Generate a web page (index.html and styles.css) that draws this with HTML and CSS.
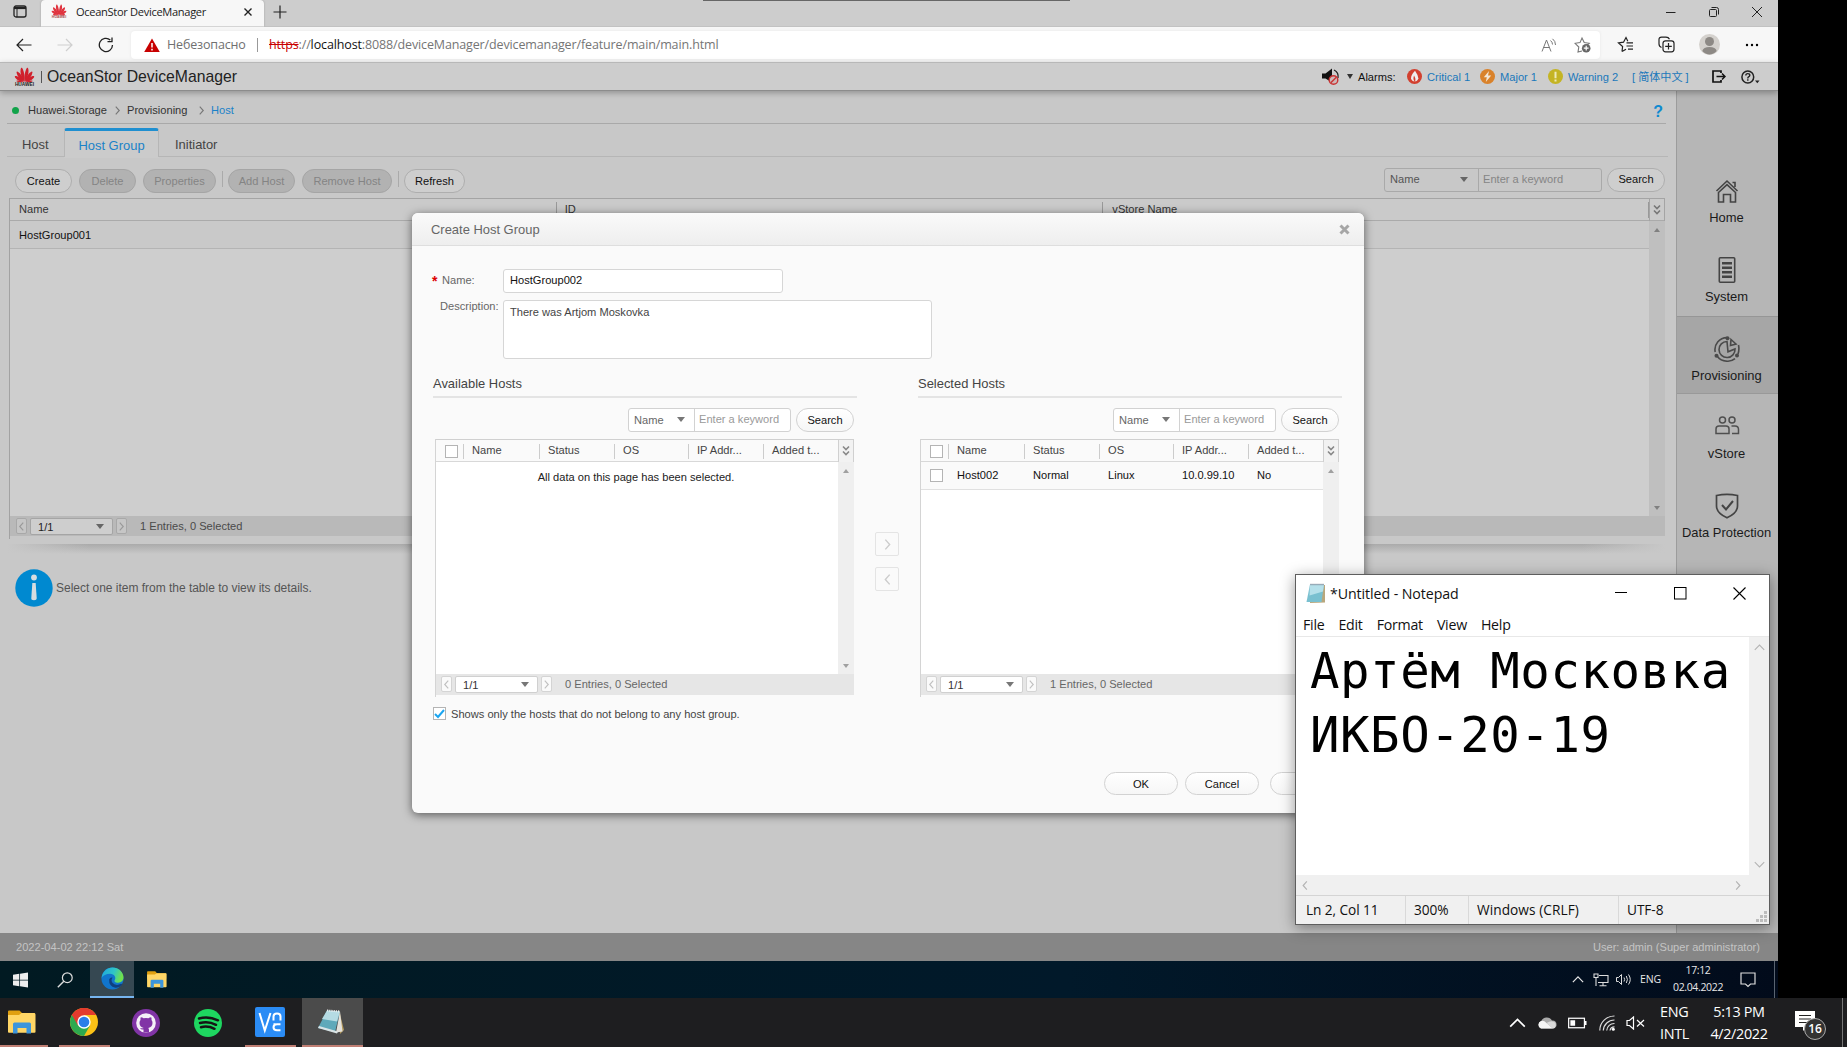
FILE: index.html
```html
<!DOCTYPE html>
<html lang="en">
<head>
<meta charset="utf-8">
<title>OceanStor DeviceManager</title>
<link rel="stylesheet" href="styles.css">
</head>
<body>
<svg class="defs" aria-hidden="true">
  <symbol id="petals" viewBox="0 0 22 16">
    <path transform="rotate(-12 11 15.500)" d="M11 15C8.800 11 8 4 10.500 .3q.5-.5 1 0C13.200 4 12.500 11 11 15z"/>
    <path transform="rotate(12 11 15.500)" d="M11 15C9.500 11 8.800 4 10.500 .3q.5-.5 1 0C14 4 13.200 11 11 15z"/>
    <path transform="rotate(-36 11 15.500)" d="M11 14.800C8.800 11 8.400 5 10.500 2q.5-.5 1 0c1.700 3 1.300 9-.5 12.800z"/>
    <path transform="rotate(36 11 15.500)" d="M11 14.800C9.200 11 8.800 5 10.500 2q.5-.5 1 0c2.100 3 1.700 9-.5 12.800z"/>
    <path transform="rotate(-59 11 15.500)" d="M11 14.600C9 11.500 8.800 6.500 10.500 4q.5-.5 1 0c1.500 2.500 1.200 7.500-.5 10.600z"/>
    <path transform="rotate(59 11 15.500)" d="M11 14.600C9.300 11.500 9 6.500 10.500 4q.5-.5 1 0c1.700 2.500 1.500 7.500-.5 10.600z"/>
    <path transform="rotate(-83 11 15.500)" d="M11 14.300q-1.300-4-.3-7 .5-.6 1 0 1 3-.7 7z"/>
    <path transform="rotate(83 11 15.500)" d="M11 14.300q-1.700-4-.7-7 .5-.6 1 0 1 3-.3 7z"/>
  </symbol>
  <symbol id="expand" viewBox="0 0 10 12"><path d="M2 1.500l3 3 3-3M2 6.500l3 3 3-3" fill="none" stroke="currentColor" stroke-width="1.600"/></symbol>
  <symbol id="left" viewBox="0 0 8 12"><path d="M6 1.500L2 6l4 4.500" fill="none" stroke="currentColor" stroke-width="1.300"/></symbol>
  <symbol id="right" viewBox="0 0 8 12"><path d="M2 1.500L6 6l-4 4.500" fill="none" stroke="currentColor" stroke-width="1.300"/></symbol>
  <symbol id="folder" viewBox="0 0 28 24">
    <path d="M0 1.500Q0 .5 1 .5h10.500L14 3H27v8H0z" fill="#e0a010"/>
    <path d="M0 5h11l2.500-2H26q1.500 0 1.500 1.500V22q0 .8-1 .8H1Q0 22.800 0 22z" fill="#ffd666"/>
    <path d="M5 23.500V14q0-1.500 1.500-1.500h15Q23 12.500 23 14v9.500h-4.500V18h-9v5.500z" fill="#3c95dc"/>
  </symbol>
  <symbol id="chevron" viewBox="0 0 14 8"><path d="M1 7l6-6 6 6" fill="none" stroke="currentColor" stroke-width="1.400"/></symbol>
</svg>

<div class="desktop">
  <div class="guest">
    <div class="tabstrip">
      <svg class="ico-panel" viewBox="0 0 14 13"><rect x="1" y="1" width="12" height="11" rx="2" fill="none" stroke="#222" stroke-width="1.300"/><path d="M1 3h12" stroke="#222" stroke-width="2.200"/><path d="M4 3v9" stroke="#222"/></svg>
      <div class="tab">
        <div class="tab-logo"><svg fill="#e0343f"><use href="#petals"/></svg><span>HUAWEI</span></div>
        <span class="tab-title">OceanStor DeviceManager</span>
        <svg class="tab-x" viewBox="0 0 10 10"><path d="M1.500 1.500l7 7M8.500 1.500l-7 7" stroke="#222" stroke-width="1.400"/></svg>
      </div>
      <svg class="plus" viewBox="0 0 14 14"><path d="M7 .5v13M.5 7h13" stroke="#222" stroke-width="1.200"/></svg>
      <div class="strip-line"></div>
      <div class="win-btns">
        <svg viewBox="0 0 12 12"><path d="M1 6.500h9.500" stroke="#222"/></svg>
        <svg viewBox="0 0 12 12"><rect x="1.500" y="3.500" width="7" height="7" rx="1" fill="none" stroke="#222"/><path d="M3.500 1.500h5q2 0 2 2v5" fill="none" stroke="#222"/></svg>
        <svg viewBox="0 0 12 12"><path d="M1 1l10 10M11 1L1 11" stroke="#222"/></svg>
      </div>
    </div>

    <div class="toolbar">
      <svg class="nav back" viewBox="0 0 16 14"><path d="M15.500 7H1M7 1L1 7l6 6" fill="none" stroke="#222" stroke-width="1.200"/></svg>
      <svg class="nav fwd" viewBox="0 0 16 14"><path d="M.5 7H15M9 1l6 6-6 6" fill="none" stroke="#cfcfcf" stroke-width="1.200"/></svg>
      <svg class="nav reload" viewBox="0 0 16 16"><path d="M14.500 8A6.600 6.600 0 1 1 12.300 3M14 .5v4.200H9.500" fill="none" stroke="#222" stroke-width="1.300"/></svg>
      <div class="address">
        <svg class="warn" viewBox="0 0 16 14"><path d="M8 .5L15.800 14H.2z" fill="#c80000"/><path d="M8 5v4.500M8 10.800v1.600" stroke="#fff" stroke-width="1.500"/></svg>
        <span class="insecure">Небезопасно</span>
        <span class="addr-sep"></span>
        <span class="url"><s>https</s>://<b>localhost</b>:8088/deviceManager/devicemanager/feature/main/main.html</span>
        <svg class="ico-read" viewBox="0 0 16 14"><path d="M1 13.500L5.500 2l4.500 11.500M2.600 9.500h5.800M9.500 2.500q2 1.500 2 4M11.500 .8q3 2.200 3 6.200" fill="none" stroke="#777"/></svg>
        <svg class="ico-fav" viewBox="0 0 17 17"><path d="M8 15l-4 1 .8-5L1 7.300l5-.7L8 2l2.200 4.600 5 .7-2 1.700" fill="none" stroke="#777" stroke-width="1.100"/><circle cx="12.200" cy="12.200" r="4.300" fill="#666"/><path d="M12.200 9.800v4.800M9.800 12.200h4.800" stroke="#fff" stroke-width="1.200"/></svg>
      </div>
      <svg class="tb favs" viewBox="0 0 17 17"><path d="M5 15.500l.6-5L1.500 7l5-.8L9 1.500l1.800 3.800M5 15.500l4-2.300" fill="none" stroke="#222" stroke-width="1.200"/><path d="M9.500 6.800H16M9.500 10H16M11 13.200h5" stroke="#222" stroke-width="1.200"/></svg>
      <svg class="tb coll" viewBox="0 0 17 17"><path d="M3.500 11.500Q1 10.500 1 8V3.500Q1 1.200 3.500 1.200H8q2.500 0 3.500 2" fill="none" stroke="#222" stroke-width="1.200"/><rect x="5" y="4.800" width="11" height="11" rx="2.500" fill="none" stroke="#222" stroke-width="1.200"/><path d="M10.500 7v6.600M7.200 10.300h6.600" stroke="#222" stroke-width="1.200"/></svg>
      <svg class="avatar" viewBox="0 0 21 21"><circle cx="10.500" cy="10.500" r="10.500" fill="#d4d1cd"/><circle cx="10.500" cy="7.500" r="4.500" fill="#8d8985"/><path d="M3.300 17q1-4 7.200-4t7.200 4q-3 3.400-7.200 3.400T3.300 17z" fill="#8d8985"/></svg>
      <svg class="dots" viewBox="0 0 14 4"><circle cx="2" cy="2" r="1.200"/><circle cx="7" cy="2" r="1.200"/><circle cx="12" cy="2" r="1.200"/></svg>
    </div>

    <header class="app-head">
      <div class="brand-logo"><svg fill="#d0202c"><use href="#petals"/></svg><span>HUAWEI</span></div>
      <span class="brand-bar"></span>
      <span class="brand">OceanStor DeviceManager</span>
      <svg class="sound" viewBox="0 0 18 17"><path d="M0 5.500h3.500L10 .5v14L3.500 10.500H0z" fill="#111"/><path d="M12 2q5 2.500 4 8" fill="none" stroke="#222" stroke-width="1.300"/><circle cx="11.500" cy="12" r="4.300" fill="#cdb9b9" stroke="#c93333" stroke-width="1.400"/><path d="M8.800 14.800l5.500-5.500" stroke="#c93333" stroke-width="1.400"/></svg>
      <span class="tiny-caret"></span>
      <span class="alarms">Alarms:</span>
      <svg class="al" viewBox="0 0 15 15"><circle cx="7.500" cy="7.500" r="7.500" fill="#d2402f"/><path d="M8 1.800Q4 6 4 9.200a3.700 3.700 0 0 0 7.300 0Q11 6 8 1.800z" fill="#eee"/><path d="M7 6.500q-1.500 4 .8 6Q9.500 10.500 7 6.500z" fill="#d2402f"/></svg>
      <a class="w53">Critical 1</a>
      <svg class="al" viewBox="0 0 15 15"><circle cx="7.500" cy="7.500" r="7.500" fill="#d9822b"/><path d="M9 2L3.800 8.300h3L5.800 13l5.400-6.400H8z" fill="#f2e6d6"/></svg>
      <a class="w48">Major 1</a>
      <svg class="al" viewBox="0 0 15 15"><circle cx="7.500" cy="7.500" r="7.500" fill="#c4b424"/><path d="M7.500 2.800v6.400M7.500 10.600v2" stroke="#eee9b8" stroke-width="2"/></svg>
      <a class="w64">Warning 2</a>
      <a class="lang">[ 简体中文 ]</a>
      <svg class="logout" viewBox="0 0 14 13"><path d="M9 3V1H1v11h8v-2" fill="none" stroke="#111" stroke-width="1.700"/><path d="M4.500 6.500H12M10 3.500l3 3-3 3" fill="none" stroke="#111" stroke-width="1.500"/></svg>
      <svg class="help" viewBox="0 0 19 14"><circle cx="6.800" cy="7" r="5.900" fill="none" stroke="#222" stroke-width="1.500"/><path d="M4.800 5.500q0-1.900 2-1.900t2 1.700q0 1-1.200 1.600-.8.400-.8 1.500M6.800 9.300v1.500" fill="none" stroke="#222" stroke-width="1.400"/><path d="M14 10.500h4.500l-2.200 2.800z" fill="#222"/></svg>
    </header>

    <div class="app-body">
      <main class="main">
        <nav class="crumbs">
          <i class="dot"></i><span class="c1">Huawei.Storage</span><svg class="cr"><use href="#right"/></svg>
          <span class="c2">Provisioning</span><svg class="cr"><use href="#right"/></svg><span class="c3">Host</span>
          <span class="q">?</span>
        </nav>
        <div class="tabs"><span class="t t-host">Host</span><span class="t active">Host Group</span><span class="t t-init">Initiator</span></div>
        <div class="actions">
          <span class="btn w57">Create</span><span class="btn off w57">Delete</span><span class="btn off w73">Properties</span><i class="bar"></i>
          <span class="btn off w67">Add Host</span><span class="btn off w90">Remove Host</span><i class="bar"></i><span class="btn w61">Refresh</span>
          <div class="filter"><span class="sel">Name<i class="caret"></i></span><span class="kw">Enter a keyword</span></div>
          <span class="btn w58">Search</span>
        </div>
        <div class="grid">
          <div class="ghead"><span class="g1">Name</span><span class="g2">ID</span><span class="g3">vStore Name</span><span class="gx"><svg><use href="#expand"/></svg></span></div>
          <div class="gbody"><div class="grows"><div class="grow">HostGroup001</div></div><div class="scroll"><i class="up"></i><i class="down"></i></div></div>
          <div class="pager"><span class="pg"><svg><use href="#left"/></svg></span><span class="pgsel">1/1<i class="caret"></i></span><span class="pg"><svg><use href="#right"/></svg></span><span class="count">1 Entries, 0 Selected</span></div>
        </div>
        <div class="grid-shadow"></div>
        <div class="hint">
          <svg viewBox="0 0 38 38"><circle cx="19" cy="19" r="18.700" fill="#0089d0"/><circle cx="19" cy="8.500" r="2.900" fill="#d6dde0"/><path d="M17.300 14h3.400l1 15.500q.1 1.700-2.700 1.700t-2.700-1.700z" fill="#d6dde0"/></svg>
          <span>Select one item from the table to view its details.</span>
        </div>
      </main>
      <aside class="side">
        <div class="item"><svg viewBox="0 0 26 26"><path d="M2.500 13L13 3l10.500 10M18.500 4.500h2.500v4.500" fill="none" stroke="#444" stroke-width="1.600"/><path d="M4.500 14.500L13 6.600l8.500 7.900v9.500h-5v-7.500h-7V24h-5z" fill="none" stroke="#444" stroke-width="1.600"/></svg><span>Home</span></div>
        <div class="item"><svg viewBox="0 0 26 26"><rect x="5.300" y=".8" width="15.400" height="24.400" rx="1" fill="none" stroke="#444" stroke-width="1.600"/><path d="M8 6.300h10M8 10.800h10M8 15.300h10M8 19.800h10" stroke="#444" stroke-width="2.600"/></svg><span>System</span></div>
        <div class="item on"><svg viewBox="0 0 26 26"><g fill="none" stroke="#4a4a4a" stroke-width="1.600"><path d="M13 5.500a8 8 0 1 0 8 7.500L14 15.800z"/><path d="M17 3.500L22 8l-5.500 1.500z"/><path d="M1.200 16A12 12 0 0 1 13 1.600M24.500 9q1 5-.5 9M3 20q4 5.500 11 5.200 4 0 7-2.500"/></g><circle cx="13.500" cy="2.200" r="2" fill="#4a4a4a"/><circle cx="2.500" cy="19.800" r="2" fill="#4a4a4a"/><circle cx="23" cy="19.500" r="2" fill="#4a4a4a"/></svg><span>Provisioning</span></div>
        <div class="item"><svg viewBox="0 0 26 26"><g fill="none" stroke="#4f4f4f" stroke-width="1.500"><circle cx="8.500" cy="6" r="3"/><circle cx="18" cy="6" r="3"/><path d="M2 19.500v-4.500q0-3 3-3h7q3 0 3 3v4.500zM17.500 12H21q3.500 0 3.500 3.500v4h-6.500"/></g></svg><span>vStore</span></div>
        <div class="item"><svg viewBox="0 0 26 26"><path d="M2.500 2.500Q13 .3 23.500 2.500V13q0 7-10.500 11.800Q2.500 20 2.500 13z" fill="none" stroke="#444" stroke-width="1.700"/><path d="M8 12l4 4.500L19 8" fill="none" stroke="#444" stroke-width="2"/></svg><span>Data Protection</span></div>
      </aside>
    </div>

    <footer class="app-foot"><span class="f-l">2022-04-02 22:12 Sat</span><span class="f-r">User: admin (Super administrator)</span></footer>

    <div class="gtask">
      <svg class="gt-win" viewBox="0 0 16 16"><path d="M0 2.300l6.700-.9v6.200H0zM7.500 1.300L16 0v7.600H7.500zM0 8.400h6.700v6.200L0 13.700zM7.500 8.400H16V16l-8.500-1.300z" fill="#eee"/></svg>
      <svg class="gt-search" viewBox="0 0 16 16"><circle cx="10.300" cy="5.700" r="4.900" fill="none" stroke="#ddd" stroke-width="1.200"/><path d="M6.800 9.200L.8 15.200" stroke="#ddd" stroke-width="1.400"/></svg>
      <div class="gt-edge"><svg viewBox="0 0 24 24">
        <defs><linearGradient id="e1" x1="0" y1="0" x2="1" y2=".3"><stop offset="0" stop-color="#1fa4e0"/><stop offset=".6" stop-color="#2fc5c6"/><stop offset="1" stop-color="#6fe04d"/></linearGradient></defs>
        <circle cx="12" cy="12" r="11.500" fill="#1175cc"/>
        <path d="M.6 11.500C1.500 4.500 6.500 .5 12 .5c6.500 0 11.500 5 11.500 10.300 0 3.500-2.500 5.600-5.600 5.600-3.500 0-4.400-1.600-3.500-2.900 1.600-2.500-.4-6.500-5-6.500-4 0-7.500 1.700-8.800 4.500z" fill="url(#e1)"/>
        <path d="M8.500 13q-.5 7 6.500 8.700 4 .5 7.300-3.500l-1.300-.6q-6 2.800-9.500-1.600-1.300-2.500.5-5-2.500-.5-3.500 2z" fill="#0f3f7f"/><path d="M23.500 16.500q-1.500 4-4 5.500l5 2z" fill="#364852"/></svg></div>
      <svg class="gt-folder"><use href="#folder"/></svg>
      <svg class="gt-chev"><use href="#chevron"/></svg>
      <svg class="gt-net" viewBox="0 0 16 14"><path d="M6 2.500h9v7H5M10 9.500v3M6.500 12.700h7M1 1h4v3.500H1zM3 4.500V13" fill="none" stroke="#ddd" stroke-width="1.100"/></svg>
      <svg class="gt-vol" viewBox="0 0 16 13"><path d="M1 4.500h2L6 1.500v10L3 8.500H1z" fill="none" stroke="#ddd"/><path d="M8.500 4.500q1.300 2 0 4M10.800 3q2.200 3.500 0 7M13 1.500q3.500 5 0 10" fill="none" stroke="#ddd"/></svg>
      <span class="gt-lang">ENG</span>
      <span class="gt-clock"><span>17:12</span><span>02.04.2022</span></span>
      <svg class="gt-note" viewBox="0 0 16 16"><path d="M1 1h14v11h-4.500L8 14.500 5.500 12H1z" fill="none" stroke="#ddd" stroke-width="1.200"/></svg>
      <i class="gt-edge-line"></i>
    </div>
  </div>

  <div class="htask">
    <div class="ha run"><svg class="h-folder"><use href="#folder"/></svg></div>
    <div class="ha run chrome"><svg viewBox="0 0 28 28"><circle cx="14" cy="14" r="14" fill="#fbc116"/><path d="M14 14L1.900 7A14 14 0 0 1 26.100 7H14z" fill="#e33b2e"/><path d="M14 14L1.900 7a14 14 0 0 0 12.100 21l6-10.500z" fill="#2da94f"/><path d="M1.900 7A14 14 0 0 1 26.100 7H14v7L8 17.500z" fill="#e33b2e"/><circle cx="14" cy="14" r="6.700" fill="#fff"/><circle cx="14" cy="14" r="5.300" fill="#2b7de9"/></svg></div>
    <div class="ha github"><svg viewBox="0 0 28 28"><circle cx="14" cy="14" r="14" fill="#8134a6"/><circle cx="14" cy="14" r="9.800" fill="#f5f0f8"/><path d="M11.500 23.500v-3q-2.500.5-3.500-1.500 2 .5 3.700 0-4.200-1-4.200-5 0-1.800 1-3-.3-1.500.3-2.800 1.500.1 2.800 1.100 2.400-.6 4.800 0 1.300-1 2.800-1.100.6 1.300.3 2.800 1 1.200 1 3 0 4-4.200 5 .7.800.7 2v2.500z" fill="#8134a6"/></svg></div>
    <div class="ha spotify"><svg viewBox="0 0 28 28"><circle cx="14" cy="14" r="14" fill="#1ed760"/><path d="M5 9.500q9.500-2.600 19 1.800M6 14q8.500-2.200 16 1.800M7 18.200q7-1.700 13.500 1.600" fill="none" stroke="#151515" stroke-width="2.500" stroke-linecap="round"/></svg></div>
    <div class="ha run2 vnc"><svg viewBox="0 0 30 30"><rect width="30" height="30" rx="2" fill="#2b8cf5"/><path d="M4.500 6L9.800 23.500 15.500 6" fill="none" stroke="#fff" stroke-width="2"/><path d="M18.500 13.500V9.500q0-3 3.500-3t3.500 3v4M25.500 17.300H22q-3.500 0-3.500 3t3.500 3h3.500M18.500 17.300h2" fill="none" stroke="#fff" stroke-width="2"/></svg></div>
    <div class="ha run active notepad"><svg viewBox="0 0 28 28"><path d="M22 2l5 20-4 4z" fill="#b39a5e"/><path d="M10 2.500l13 1-5 20.500L1 20z" fill="#5fa9ba"/><path d="M10 2.500l13 1-3 10L5 11z" fill="#b5dbe3"/><path d="M23 3.500l2.500 20-6.500 1z" fill="#e4e2dc"/><path d="M10 2.500l13 1" stroke="#eee" stroke-width="2" stroke-dasharray="1.200 1"/><path d="M1 20l19 5.500 1-2L2 18z" fill="#d9e4e6"/></svg></div>
    <svg class="h-chev"><use href="#chevron"/></svg>
    <svg class="h-cloud" viewBox="0 0 20 13"><path d="M4 12.500a4 4 0 0 1 .3-7.500A6 6 0 0 1 15 4.500a4 4 0 0 1 1 8z" fill="#aaa"/><path d="M4 12.500a4 4 0 0 1 0-7.500q3-.7 5.500 2L16 12.500z" fill="#f5f5f5"/><path d="M9.500 7q4-2.700 7.500-1.300a3.700 3.700 0 0 1-1 6.800z" fill="#dadada"/></svg>
    <svg class="h-batt" viewBox="0 0 20 12"><rect x=".7" y="1" width="16.600" height="10" fill="none" stroke="#fff" stroke-width="1.300"/><path d="M2.500 3h5v6h-5zM17.500 4h2v4h-2z" fill="#fff"/></svg>
    <svg class="h-wifi" viewBox="0 0 16 16"><g fill="none" stroke="#ddd" stroke-width="1.200"><path d="M.8 15.500A14.500 14.500 0 0 1 15.500 1M4.300 15.500A11 11 0 0 1 15.500 5M7.700 15.500A7.500 7.500 0 0 1 15.500 8.500M11 15.500a4.500 4.500 0 0 1 4.500-3.700"/></g><circle cx="14.300" cy="14.300" r="1.500" fill="#fff"/></svg>
    <svg class="h-vol" viewBox="0 0 19 14"><path d="M1 4.500h2.500L7.500 1v12l-4-3.500H1z" fill="none" stroke="#fff" stroke-width="1.200"/><path d="M11 4l7 6.500M18 4l-7 6.500" stroke="#fff" stroke-width="1.200"/></svg>
    <span class="h-two h-lang"><span>ENG</span><span>INTL</span></span>
    <span class="h-two h-clock"><span>5:13 PM</span><span>4/2/2022</span></span>
    <div class="h-note"><svg viewBox="0 0 20 20"><path d="M0 0h20v16H12l-4 4v-4H0z" fill="#fff"/><path d="M4 4.500h12M4 8h12M4 11.500h8" stroke="#222" stroke-width="1.200"/></svg><b>16</b></div>
    <i class="h-line"></i>
  </div>

  <section class="dialog">
    <div class="d-head"><span>Create Host Group</span><svg viewBox="0 0 11 11"><path d="M1.500 1.500l8 8M9.500 1.500l-8 8" stroke="#a6a6a6" stroke-width="3"/></svg></div>
    <div class="d-form">
      <div class="fr"><span class="lb"><i>*</i>Name:</span><span class="inp">HostGroup002</span></div>
      <div class="fr fr2"><span class="lb desc">Description:</span><span class="area">There was Artjom Moskovka</span></div>
    </div>
    <div class="d-cols">
      <div class="col">
        <h3>Available Hosts</h3>
        <div class="frow"><div class="filter sm"><span class="sel">Name<i class="caret"></i></span><span class="kw">Enter a keyword</span></div><span class="btn w58">Search</span></div>
        <div class="tbl">
          <div class="tr th"><span class="ck"><i class="cb"></i></span><span>Name</span><span>Status</span><span>OS</span><span>IP Addr...</span><span>Added t...</span><span class="gx"><svg><use href="#expand"/></svg></span></div>
          <div class="tb-body"><div class="rows"><p>All data on this page has been selected.</p></div><div class="scroll"><i class="up"></i><i class="down"></i></div></div>
          <div class="pager"><span class="pg"><svg><use href="#left"/></svg></span><span class="pgsel">1/1<i class="caret"></i></span><span class="pg"><svg><use href="#right"/></svg></span><span class="count">0 Entries, 0 Selected</span></div>
        </div>
        <label class="only"><i class="cb"><svg viewBox="0 0 11 11"><path d="M1 6l3 3 6-7" fill="none" stroke="#1ba5f0" stroke-width="2"/></svg></i>Shows only the hosts that do not belong to any host group.</label>
      </div>
      <div class="mover"><span><svg><use href="#right"/></svg></span><span><svg><use href="#left"/></svg></span></div>
      <div class="col">
        <h3>Selected Hosts</h3>
        <div class="frow"><div class="filter sm"><span class="sel">Name<i class="caret"></i></span><span class="kw">Enter a keyword</span></div><span class="btn w58">Search</span></div>
        <div class="tbl">
          <div class="tr th"><span class="ck"><i class="cb"></i></span><span>Name</span><span>Status</span><span>OS</span><span>IP Addr...</span><span>Added t...</span><span class="gx"><svg><use href="#expand"/></svg></span></div>
          <div class="tb-body"><div class="rows"><div class="tr td"><span class="ck"><i class="cb"></i></span><span>Host002</span><span>Normal</span><span>Linux</span><span>10.0.99.10</span><span>No</span></div></div><div class="scroll"><i class="up"></i><i class="down"></i></div></div>
          <div class="pager"><span class="pg"><svg><use href="#left"/></svg></span><span class="pgsel">1/1<i class="caret"></i></span><span class="pg"><svg><use href="#right"/></svg></span><span class="count">1 Entries, 0 Selected</span></div>
        </div>
      </div>
    </div>
    <div class="d-foot"><span class="btn">OK</span><span class="btn">Cancel</span><span class="btn last"></span></div>
  </section>

  <section class="note">
    <div class="n-title">
      <svg class="n-ico" viewBox="0 0 20 21"><path d="M4 2h15v17.500l-15 .5z" fill="#b9a77c"/><path d="M4 1.500h14L15.500 19H.5z" fill="#79c0d0"/><path d="M4 1.500h14l-1 7-13.500 4z" fill="#b5e0ea"/><path d="M4.500 1.500h13" stroke="#778" stroke-width="1.600" stroke-dasharray="1 1"/></svg>
      <span>*Untitled - Notepad</span>
      <div class="n-btns">
        <svg viewBox="0 0 13 13"><path d="M0 5.500h12" stroke="#000"/></svg>
        <svg viewBox="0 0 13 13"><rect x=".5" y=".5" width="11.500" height="11.500" fill="none" stroke="#000"/></svg>
        <svg viewBox="0 0 13 13"><path d="M.5 .5l12 12M12.500 .5l-12 12" stroke="#000" stroke-width="1.100"/></svg>
      </div>
    </div>
    <div class="n-menu"><span>File</span><span>Edit</span><span>Format</span><span>View</span><span>Help</span></div>
    <div class="n-mid">
      <div class="n-text"><div>Артём Московка</div><div>ИКБО-20-19</div></div>
      <div class="n-vs"><svg><use href="#chevron"/></svg><svg class="flip"><use href="#chevron"/></svg></div>
    </div>
    <div class="n-hs"><svg><use href="#left"/></svg><svg><use href="#right"/></svg></div>
    <div class="n-status"><span class="s1">Ln 2, Col 11</span><span class="s2">300%</span><span class="s3">Windows (CRLF)</span><span class="s4">UTF-8</span>
      <svg viewBox="0 0 12 12"><path d="M8 0h3v3H8zM4 4h3v3H4zM8 4h3v3H8zM0 8h3v3H0zM4 8h3v3H4zM8 8h3v3H8z" fill="#bdbdbd"/></svg></div>
  </section>
</div>
</body>
</html>
```
FILE: styles.css
```css
* { box-sizing: border-box; }
body { margin: 0; background: #000; overflow: hidden; font: 11.1px "Liberation Sans", Arial, sans-serif; color: #333; }
svg { display: block; flex: none; }
i { font-style: normal; }
.defs { position: absolute; width: 0; height: 0; }
.desktop { position: relative; width: 1847px; height: 1047px; display: flex; flex-direction: column; white-space: nowrap; }
.guest { width: 1778px; height: 998px; display: flex; flex-direction: column; overflow: hidden; background: #c8c8c8; }

/* browser chrome */
.tabstrip { height: 27px; flex: none; background: #cdcdcd; display: flex; align-items: center; border-bottom: 1px solid #c2c2c2; padding-left: 13px; }
.ico-panel { width: 14px; height: 13px; margin: 0 14px 3px 0; }
.tab { width: 223px; height: 27px; background: #f7f7f7; border-radius: 4px 4px 0 0; display: flex; align-items: center; padding: 0 11px 4px 10px; box-shadow: 0 0 2px #999; clip-path: inset(0 -3px 0 -3px); }
.tab-logo { width: 16px; display: flex; flex-direction: column; align-items: center; padding-top: 1px; }
.tab-logo svg { width: 16px; height: 12px; }
.tab-logo span { font: bold 3.600px/3px "Liberation Sans", sans-serif; color: #a55; }
.tab-title { margin-left: 9px; font: 11.1px "Open Sans", sans-serif; letter-spacing: -.32px; flex: 1; color: #222; }
.tab-x { width: 10px; height: 10px; margin-top: 1px; }
.plus { width: 14px; height: 14px; margin: 0 416px 3px 9px; }
.strip-line { width: 367px; height: 1px; background: #666; align-self: flex-start; }
.win-btns { margin-left: auto; padding: 0 15px 3px 0; display: flex; gap: 31px; }
.win-btns svg { width: 12px; height: 12px; }
.toolbar { height: 35px; flex: none; background: #f7f7f7; display: flex; align-items: center; padding-left: 16px; }
.nav.back { width: 16px; height: 14px; }
.nav.fwd { width: 16px; height: 14px; margin-left: 25px; }
.nav.reload { width: 16px; height: 16px; margin: 0 17px 0 25px; }
.address { width: 1469px; height: 28px; background: #fff; border-radius: 4px; display: flex; align-items: center; padding-left: 13px; box-shadow: 0 0 3px #e4e4e4; }
.warn { width: 16px; height: 14px; }
.insecure { width: 78px; margin-left: 7px; font: 12.5px "Open Sans", sans-serif; letter-spacing: -.15px; color: #707070; }
.addr-sep { width: 1px; height: 14px; background: #999; margin: 0 11px 0 12px; }
.url { font: 12.5px "Open Sans", sans-serif; letter-spacing: -.13px; color: #757575; flex: 1; }
.url s { color: #c80000; }
.url b { font-weight: 400; color: #111; }
.ico-read { width: 16px; height: 14px; margin-right: 17px; }
.ico-fav { width: 17px; height: 17px; margin-right: 9px; }
.tb { width: 17px; height: 17px; }
.favs { margin-left: 17px; }
.coll { margin: 0 24px 0 24px; }
.avatar { width: 21px; height: 21px; }
.dots { width: 14px; height: 4px; margin-left: 25px; }

/* application header */
.app-head { height: 29px; flex: none; background: #cdcdcd; border-top: 1px solid #b8b8b8; border-bottom: 1px solid #8c8c8c; display: flex; align-items: center; padding-left: 14px; position: relative; box-shadow: 0 2px 6px rgba(0,0,0,.28); }
.brand-logo { width: 21px; display: flex; flex-direction: column; align-items: center; }
.brand-logo svg { width: 21px; height: 16px; }
.brand-logo span { font: bold 4.800px/4px "Liberation Sans", sans-serif; color: #222; }
.brand-bar { width: 1px; height: 12px; background: #555; margin: 0 5px 0 6px; }
.brand { font-size: 15.75px; color: #222; flex: 1; padding-top: 1px; }
.sound { width: 18px; height: 17px; }
.tiny-caret { width: 0; border: 3px solid transparent; border-top: 5px solid #333; border-bottom: 0; margin: 0 5px 0 7px; }
.alarms { width: 49px; color: #111; }
.al { width: 15px; height: 15px; margin-right: 5px; }
.app-head a { color: #1a78bb; }
.w53 { width: 53px; }
.w48 { width: 48px; }
.w64 { width: 64px; }
.lang { width: 80px; font-family: "Liberation Sans", "Noto Sans CJK SC", sans-serif; padding-bottom: 2px; }
.logout { width: 14px; height: 13px; margin-right: 15px; }
.help { width: 19px; height: 14px; margin-right: 18px; }

.app-body { height: 842px; flex: none; display: flex; }
.main { width: 1676px; padding-left: 7px; display: flex; flex-direction: column; }
.crumbs { height: 33px; width: 1659px; border-bottom: 1px solid #a9a9a9; display: flex; align-items: center; padding: 6px 0 0 5px; }
.dot { width: 7px; height: 7px; border-radius: 50%; background: #11a34a; margin-right: 9px; }
.c1 { width: 86px; }
.c2 { width: 71px; }
.cr { width: 7px; height: 11px; color: #777; margin-right: 6px; }
.c3 { color: #1a82c8; flex: 1; }
.q { font: bold 16px "Liberation Sans", sans-serif; color: #0f8ad0; margin: 3px 3px 0 0; }
.tabs { height: 33px; width: 1661px; border-bottom: 1px solid #b6b6b6; display: flex; padding-top: 4px; font-size: 12.95px; line-height: 34px; color: #444; }
.t-host { width: 57px; padding-left: 15px; }
.tabs .active { width: 95px; height: 29px; border: 1px solid #b6b6b6; border-top: 3px solid #1f8fd0; border-bottom: 0; background: #cbcbcb; color: #1a82c8; border-radius: 3px 3px 0 0; text-align: center; line-height: 29px; box-shadow: 0 1px #cbcbcb; }
.t-init { padding-left: 16px; }
.actions { height: 41px; width: 1659px; display: flex; align-items: center; padding: 7px 1px 0 8px; }
.btn { height: 24px; border: 1px solid #aeaeae; border-radius: 12px; display: flex; align-items: center; justify-content: center; color: #111; background: #cecece; margin-right: 7px; flex: none; }
.btn.off { background: #b2b2b2; border-color: #a5a5a5; color: #848484; }
.w57 { width: 57px; } .w58 { width: 58px; } .w61 { width: 61px; } .w67 { width: 67px; } .w73 { width: 73px; } .w90 { width: 90px; }
.bar { width: 1px; height: 16px; background: #aaa; margin: 0 5px 4px -1px; }
.filter { display: flex; height: 24px; width: 218px; border: 1px solid #a9a9a9; border-radius: 3px; margin: 0 5px 3px auto; line-height: 21px; }
.actions .filter + .btn { margin: 0 0 3px; padding-bottom: 1px; }
.sel { width: 94px; border-right: 1px solid #a9a9a9; padding: 0 10px 0 5px; display: flex; align-items: center; justify-content: space-between; color: #555; }
.kw { padding-left: 4px; color: #858585; }
.caret { border: 4px solid transparent; border-top: 5px solid #666; border-bottom: 0; }
.grid { width: 1656px; margin-left: 2px; height: 341px; border-left: 1px solid #a2a2a2; flex: none; }
.ghead { height: 23px; border-top: 1px solid #a4a4a4; border-bottom: 1px solid #aaa; display: flex; align-items: center; background: #cacaca; }
.ghead span { padding-left: 9px; line-height: 14px; padding-bottom: 2px; }
.ghead .g1 { width: 546px; }
.ghead .g2 { width: 547px; padding-left: 8px; border-left: 1px solid #999; }
.g3 { width: 547px; border-left: 1px solid #999; border-right: 1px solid #999; }
.ghead .gx, .gx { width: 16px; height: 22px; padding: 0; border-left: 1px solid #a4a4a4; border-right: 1px solid #a4a4a4; display: flex; align-items: center; justify-content: center; color: #777; }
.gx svg { width: 10px; height: 12px; }
.gbody { height: 295px; display: flex; background: #cecece; }
.grows { flex: 1; }
.grow { height: 28px; line-height: 28px; padding-left: 9px; background: #c9c9c9; border-bottom: 1px solid #b4b4b4; color: #111; }
.scroll { width: 16px; background: #bfbfbf; display: flex; flex-direction: column; align-items: center; justify-content: space-between; padding: 7px 0 6px; }
.up, .down { border: 3.500px solid transparent; }
.up { border-bottom: 4px solid #808080; border-top: 0; }
.down { border-top: 4px solid #808080; border-bottom: 0; }
.pager { height: 20px; background: #b9b9b9; display: flex; align-items: center; padding-left: 6px; color: #4a4a4a; }
.pg { width: 11px; height: 16px; border: 1px solid #a8a8a8; border-radius: 2px; display: flex; align-items: center; justify-content: center; background: #c6c6c6; color: #999; flex: none; }
.pg svg { width: 7px; height: 11px; }
.pgsel { width: 83px; height: 17px; margin: 0 3px; border: 1px solid #a5a5a5; border-radius: 2px; background: #cecece; display: flex; align-items: center; justify-content: space-between; padding: 1px 8px 0 7px; color: #222; }
.count { margin-left: 13px; }
.grid-shadow { height: 10px; margin-top: 5px; width: 1658px; background: linear-gradient(90deg, #c8c8c8, rgba(200,200,200,0) 5% 95%, #c8c8c8), linear-gradient(#aaa, #c8c8c8); }
.hint { display: flex; align-items: center; margin: 15px 0 0 8px; color: #555; font-size: 12px; }
.hint span { letter-spacing: -.02px; }
.hint svg { width: 38px; height: 38px; margin-right: 3px; }

.side { width: 102px; background: #b6b6b6; border-left: 1px solid #9c9c9c; padding-top: 67px; }
.item { height: 78.8px; display: flex; flex-direction: column; align-items: center; font-size: 12.95px; color: #1a1a1a; padding: 20px 2px 0 0; }
.item svg { width: 26px; height: 26px; }
.item span { line-height: 14px; margin-top: 7px; }
.item.on { background: #a6a6a6; box-shadow: inset 0 1px #969696, inset 0 -1px #999; }

.app-foot { height: 28px; flex: none; background: #868686; color: #c4c4c4; display: flex; justify-content: space-between; align-items: center; padding: 0 18px 1px 16px; }

/* guest taskbar */
.gtask { height: 37px; flex: none; background: linear-gradient(90deg, #011a22, #01192a 60%, #020b1b); display: flex; align-items: center; padding-left: 13px; color: #e8e8e8; font-family: "Open Sans", sans-serif; }
.gt-win { width: 15px; height: 16px; }
.gt-search { width: 16px; height: 16px; margin: 0 17px 0 29px; }
.gt-edge { width: 44px; height: 37px; background: #364852; border-bottom: 2px solid #76b5f0; display: flex; align-items: center; justify-content: center; }
.gt-edge svg { width: 23px; height: 23px; }
.gt-folder { width: 20px; height: 17px; margin-left: 13px; }
.gt-chev { width: 12px; height: 7px; margin-left: auto; }
.gt-net { width: 16px; height: 14px; margin: 0 6px 0 9px; }
.gt-vol { width: 17px; height: 13px; margin-right: 8px; }
.gt-lang { font-size: 10.5px; width: 33px; letter-spacing: -.1px; padding-bottom: 1px; }
.gt-clock { width: 50px; font-size: 10.5px; line-height: 17px; letter-spacing: -.35px; display: flex; flex-direction: column; align-items: center; padding-bottom: 1px; }
.gt-note { width: 16px; height: 16px; margin: 0 18px 0 17px; }
.gt-edge-line { width: 1px; height: 37px; background: #5a6470; margin-right: 3px; }

/* host taskbar */
.htask { height: 49px; background: #1e1e20; display: flex; align-items: center; color: #fff; font-family: "Open Sans", sans-serif; }
.ha { height: 49px; display: flex; align-items: center; justify-content: center; }
.ha svg { width: 28px; height: 28px; }
.ha.run { width: 48px; border-bottom: 2px solid #c07f74; }
.ha .h-folder { width: 28px; height: 24px; margin-right: 4px; }
.ha.chrome { width: 51px; margin-left: 11px; padding-right: 2px; }
.ha.github { margin-left: 22px; }
.ha.spotify { margin-left: 34px; }
.ha.vnc { width: 51px; margin-left: 23px; border-bottom: 2px solid #c07f74; padding-right: 1px; }
.ha.vnc svg { width: 30px; height: 30px; }
.ha.notepad { width: 61px; margin-left: 6px; background: #4b4b4b; padding-right: 4px; }
.h-chev { width: 17px; height: 10px; margin-left: auto; }
.h-cloud { width: 20px; height: 13px; margin: 0 11px 0 11px; }
.h-batt { width: 19px; height: 12px; }
.h-wifi { width: 16px; height: 16px; margin: 0 11px 0 12px; }
.h-vol { width: 19px; height: 14px; }
.h-two { font-size: 14.4px; line-height: 22px; display: flex; flex-direction: column; align-items: center; letter-spacing: -.35px; padding-top: 1px; }
.h-lang { width: 31px; margin-left: 15px; align-items: flex-start; }
.h-clock { width: 60px; margin-left: 18px; }
.h-note { width: 31px; height: 32px; margin: 4px 16px 0 26px; position: relative; }
.h-note svg { width: 20px; height: 20px; margin-top: 2px; }
.h-note b { position: absolute; left: 9px; top: 9px; width: 22px; height: 22px; border-radius: 50%; border: 1px solid #aaa; background: #333; font-size: 12px; font-weight: 600; display: flex; align-items: center; justify-content: center; }
.h-line { width: 1px; height: 49px; background: #777; margin-right: 4px; }

/* create dialog */
.dialog { position: absolute; left: 412px; top: 213px; width: 952px; height: 600px; background: #fafafa; border-radius: 6px; box-shadow: 0 2px 10px rgba(0,0,0,.55); color: #444; }
.d-head { height: 33px; border-bottom: 1px solid #dedede; background: linear-gradient(#fafafa, #eee); border-radius: 6px 6px 0 0; display: flex; align-items: center; justify-content: space-between; padding: 0 14px 0 19px; font-size: 12.95px; color: #666; }
.d-head svg { width: 11px; height: 11px; }
.d-form { padding: 23px 0 0 21px; height: 131px; }
.fr { display: flex; height: 24px; }
.fr2 { height: 59px; margin-top: 7px; }
.lb { width: 70px; line-height: 23px; color: #666; }
.lb i { color: #d00; font-weight: bold; font-size: 14px; line-height: 10px; vertical-align: -2px; display: inline-block; width: 9px; margin-left: -1px; padding-right: 10px; }
.desc { line-height: 13px; padding-left: 7px; }
.inp { width: 280px; border: 1px solid #d6d6d6; border-radius: 3px; background: #fff; line-height: 21px; padding-left: 6px; color: #111; }
.area { width: 429px; border: 1px solid #d6d6d6; border-radius: 3px; background: #fff; line-height: 13px; padding: 5px 6px; }
.d-cols { display: flex; padding-left: 21px; }
.col { width: 424px; }
.col h3 { font-weight: 400; font-size: 12.95px; line-height: 14px; height: 21px; margin: 0 0 10px; border-bottom: 2px solid #e4e4e4; }
.frow { display: flex; justify-content: flex-end; padding-right: 3px; margin-bottom: 7px; }
.dialog .filter { width: 163px; background: #fff; border-color: #d2d2d2; margin: 0 5px 0 0; line-height: 20px; }
.dialog .sel { width: 66px; border-color: #d2d2d2; padding: 0 9px 1px 5px; color: #666; }
.dialog .kw { color: #9a9a9a; }
.dialog .btn { background: linear-gradient(#fff, #f6f6f6); border-color: #d2d2d2; margin: 0; }
.dialog .frow .btn { padding-bottom: 1px; }
.dialog .caret { border-top-color: #777; }
.tbl { width: 419px; margin-left: 2px; border-left: 1px solid #d4d4d4; height: 258px; }
.tr { display: grid; grid-template-columns: 27px 76px 75px 74px 75px 75px 16px; align-items: center; }
.tr span + span { padding-left: 8px; line-height: 13px; }
.th { height: 23px; border-top: 1px solid #d0d0d0; border-bottom: 1px solid #d8d8d8; }
.th span + span { border-left: 1px solid #ccc; padding-bottom: 2px; }
.tr .gx { padding: 0; height: 22px; border-color: #d0d0d0; color: #888; background: #f2f2f2; }
.ck { padding-left: 9px; }
.cb { display: block; width: 13px; height: 13px; border: 1px solid #b4b4b4; background: #fff; flex: none; }
.tb-body { height: 212px; display: flex; background: #fff; }
.rows { width: 402px; }
.rows p { margin: 8px 2px 0 0; text-align: center; line-height: 14px; color: #222; }
.td { height: 28px; background: #fafafa; border-bottom: 1px solid #e0e0e0; color: #111; }
.td span + span { padding-left: 9px; }
.dialog .scroll { background: #efefef; }
.dialog .up { border-bottom-color: #a0a0a0; }
.dialog .down { border-top-color: #a0a0a0; }
.dialog .pager { background: #e6e6e6; height: 21px; color: #666; padding: 0 0 1px 5px; }
.dialog .pg { background: #fafafa; border-color: #d4d4d4; color: #c0c0c0; }
.dialog .pgsel { background: #fff; border-color: #d0d0d0; color: #333; }
.only { display: flex; align-items: center; margin-top: 10px; gap: 5px; }
.only .cb svg { width: 11px; height: 11px; }
.mover { width: 61px; padding: 155px 0 0 18px; display: flex; flex-direction: column; gap: 11px; }
.mover span { width: 24px; height: 24px; border: 1px solid #e4e4e4; border-radius: 2px; display: flex; align-items: center; justify-content: center; color: #ccc; }
.mover svg { width: 9px; height: 13px; }
.d-foot { display: flex; gap: 7px; padding-left: 692px; margin-top: 52px; }
.d-foot .btn { width: 74px; height: 23px; }
.dialog .last { margin-left: 4px; }

/* notepad window */
.note { position: absolute; left: 1295px; top: 574px; width: 475px; height: 351px; background: #fff; border: 1px solid #5e5e5e; box-shadow: 0 3px 14px rgba(0,0,0,.4); color: #111; font: 14.2px "Open Sans", sans-serif; letter-spacing: -.08px; display: flex; flex-direction: column; }
.n-title { height: 39px; display: flex; align-items: center; padding: 0 23px 2px 10px; flex: none; }
.n-ico { width: 20px; height: 21px; margin: 0 4px 0 0; }
.n-btns { margin-left: auto; display: flex; gap: 46px; }
.n-btns svg { width: 13px; height: 13px; }
.n-menu { height: 23px; flex: none; display: flex; align-items: center; padding: 0 0 2px 7px; gap: 14px; border-bottom: 1px solid #e8e8e8; letter-spacing: -.25px; }
.n-mid { height: 238px; display: flex; }
.n-text { width: 453px; padding: 3px 0 0 14px; font: 49px/64px "DejaVu Sans Mono", monospace; letter-spacing: .55px; color: #000; }
.n-vs { width: 20px; background: #f0f0f0; display: flex; flex-direction: column; justify-content: space-between; align-items: center; padding: 7px 0; color: #b4b4b4; }
.n-vs svg { width: 11px; height: 7px; }
.flip { transform: scaleY(-1); }
.n-hs { height: 20px; background: #f0f0f0; display: flex; justify-content: space-between; align-items: center; padding: 0 27px 0 5px; color: #b4b4b4; }
.n-hs svg { width: 8px; height: 11px; }
.n-status { flex: 1; background: #f0f0f0; border-top: 1px solid #d4d4d4; display: flex; align-items: stretch; line-height: 28px; padding-left: 10px; font-size: 13.7px; }
.n-status span { border-right: 1px solid #d9d9d9; }
.s1 { width: 100px; }
.s2 { width: 63px; padding-left: 8px; }
.s3 { width: 150px; padding-left: 8px; letter-spacing: .05px; }
.n-status .s4 { padding-left: 8px; flex: 1; border: 0; }
.n-status svg { width: 12px; height: 12px; align-self: flex-end; margin: 0 1px 1px 0; }
```
